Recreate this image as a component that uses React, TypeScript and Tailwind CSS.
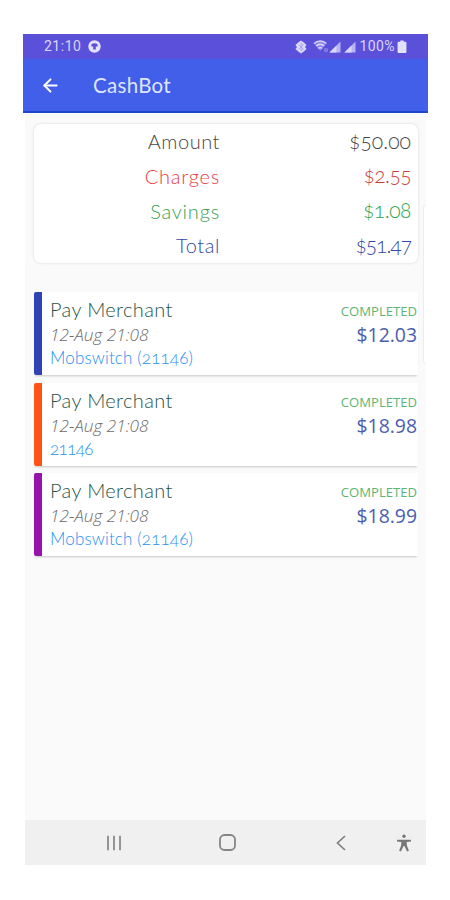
import { ArrowLeft } from 'lucide-react';

interface SummaryLine {
  label: string;
  value: string;
  labelClass: string;
  valueClass: string;
}

interface Payment {
  id: number;
  title: string;
  date: string;
  merchant: string;
  merchantClass: string;
  amount: string;
  status: string;
  barColor: string;
}

const summary: SummaryLine[] = [
  { label: 'Amount', value: '$50.00', labelClass: 'text-[#454545] tracking-[0.55px]', valueClass: 'text-[#454545] tracking-[0.05px]' },
  { label: 'Charges', value: '$2.55', labelClass: 'text-[#e84040] tracking-[0.75px]', valueClass: 'text-[#c93c3c] tracking-[-0.55px]' },
  { label: 'Savings', value: '$1.08', labelClass: 'text-[#36a050] tracking-[0.8px]', valueClass: 'text-[#2aa54a] tracking-[-0.45px]' },
  { label: 'Total', value: '$51.47', labelClass: 'text-[#3347a4] tracking-[0.6px]', valueClass: 'text-[#3347a4] tracking-[-1px]' },
];

const payments: Payment[] = [
  { id: 1, title: 'Pay Merchant', date: '12-Aug 21:08', merchant: 'Mobswitch (21146)', merchantClass: 'tracking-[0.15px]', amount: '$12.03', status: 'COMPLETED', barColor: 'bg-[#2f43b4]' },
  { id: 2, title: 'Pay Merchant', date: '12-Aug 21:08', merchant: '21146', merchantClass: 'tracking-[-0.6px]', amount: '$18.98', status: 'COMPLETED', barColor: 'bg-[#ff5316]' },
  { id: 3, title: 'Pay Merchant', date: '12-Aug 21:08', merchant: 'Mobswitch (21146)', merchantClass: 'tracking-[0.15px]', amount: '$18.99', status: 'COMPLETED', barColor: 'bg-[#9614ab]' },
];

function StatusBar() {
  return (
    <div className="flex h-[25px] items-center bg-[#5b50d9] pr-[21px] pl-[21px] font-['Roboto',sans-serif] text-[14px] text-[#d9d6fa]">
      <span className="tracking-[0.5px]">21:10</span>
      <svg className="ml-[7px] h-[13px] w-[13px]" viewBox="0 0 13 13">
        <circle cx="6.5" cy="6.5" r="6.2" fill="#e4e1fc" />
        <path d="M3.4 4.3C5 2.9 8 2.9 9.6 4.3v2.3H7.8v2.8H5.2V6.6H3.4z" fill="#5b50d9" />
      </svg>
      <div className="ml-auto flex items-center">
        <svg className="h-[14px] w-[12px]" viewBox="0 0 12 14">
          <path d="M6 0.5L8.8 2.4 11.6 5 10 7l1.6 2L8.8 11.6 6 13.5 3.2 11.6 0.4 9 2 7 0.4 5 3.2 2.4z" fill="#d9d6fa" />
          <path d="M3.8 4.9l4.4 4L6 10.8V3.2l2.2 1.9-4.4 4" fill="none" stroke="#a59eec" strokeWidth="0.8" />
        </svg>
        <svg className="ml-[6px] h-[13px] w-[16px]" viewBox="0 0 16 13">
          <path d="M1 3.5C4.6 0.2 10 0.2 13.4 3.5L7.2 11z" fill="#8e86e8" />
          <path d="M1 3.5C4.6 0.2 10 0.2 13.4 3.5M3.2 6c2.4-2.3 5.8-2.3 8 0M5.3 8.5c1.2-1.2 2.8-1.2 3.9 0" fill="none" stroke="#d9d6fa" strokeWidth="1.4" />
          <path d="M12 12V8.2M14 8.2V12" stroke="#a29cee" strokeWidth="1" />
        </svg>
        <svg className="h-[12px] w-[12px]" viewBox="0 0 12 12">
          <path d="M11.5 0.5v11H0.5z" fill="#b8b3f3" />
          <path d="M7.5 4.5v7h-7z" fill="#d9d6fa" />
        </svg>
        <svg className="ml-[3px] h-[12px] w-[12px]" viewBox="0 0 12 12">
          <path d="M11.5 0.5v11H0.5z" fill="#b8b3f3" />
          <path d="M7.5 4.5v7h-7z" fill="#d9d6fa" />
        </svg>
        <span className="ml-[4px] tracking-[0.4px]">100%</span>
        <svg className="ml-[2px] h-[13px] w-[10px]" viewBox="0 0 9 13" preserveAspectRatio="none">
          <path d="M3 0.5h3v1.3h1.5a1 1 0 0 1 1 1V12a1 1 0 0 1-1 1h-6a1 1 0 0 1-1-1V2.8a1 1 0 0 1 1-1H3z" fill="#e4e1fc" />
        </svg>
      </div>
    </div>
  );
}

function SummaryCard() {
  return (
    <div className="h-[139px] rounded-[7px] bg-white pr-[7px] shadow-[0_0_3px_rgba(0,0,0,0.14)]">
      {summary.map((line) => (
        <div key={line.label} className="flex h-[34.7px] items-center font-light oldstyle-nums">
          <span className={`w-[186px] text-right text-[20px] ${line.labelClass}`}>{line.label}</span>
          <span className={`flex-1 pb-[2px] text-right text-[21px] ${line.valueClass}`}>{line.value}</span>
        </div>
      ))}
    </div>
  );
}

function PaymentCard({ payment }: { payment: Payment }) {
  return (
    <div className="flex h-[83px] bg-white shadow-[0_2px_2px_-1px_rgba(0,0,0,0.2)]">
      <div className={`w-[8px] rounded-l-[2px] ${payment.barColor}`}></div>
      <div className="flex flex-1 justify-between pl-[8px]">
        <div className="pt-[4px]">
          <p className="h-[27px] text-[20px] leading-[26px] font-light tracking-[0.36px] text-[#1f5447]">{payment.title}</p>
          <p className="h-[24px] font-['Open_Sans',sans-serif] text-[17.2px] leading-[24px] font-light text-[#6c6c6c] italic">{payment.date}</p>
          <p className={`h-[22px] text-[17px] leading-[22px] font-light text-[#1f90ee] oldstyle-nums ${payment.merchantClass}`}>{payment.merchant}</p>
        </div>
        <div className="pt-[10px] pr-px text-right font-['Open_Sans',sans-serif]">
          <p className="h-[19px] text-[13.1px] leading-[19px] text-[#5cb572]">{payment.status}</p>
          <p className="h-[28px] text-[19.4px] leading-[28px] text-[#4a5eb0]">{payment.amount}</p>
        </div>
      </div>
    </div>
  );
}

function NavBar() {
  return (
    <div className="mx-[2px] flex h-[45px] items-center bg-[#f0f0f0]">
      <svg className="ml-[81px] h-[16px] w-[16px]" viewBox="0 0 16 16" fill="none" stroke="#8a8a8a" strokeWidth="1.8">
        <path d="M2 0.8v14.4M8 0.8v14.4M14 0.8v14.4" />
      </svg>
      <svg className="ml-[97px] h-[17px] w-[17px]" viewBox="0 0 17 17" fill="none" stroke="#858585" strokeWidth="1.8">
        <rect x="1" y="1" width="15" height="15" rx="4.5" />
      </svg>
      <svg className="ml-[100px] h-[16px] w-[10px]" viewBox="0 0 10 16" fill="none" stroke="#808080" strokeWidth="1.7">
        <path d="M9 1L1.5 8L9 15" />
      </svg>
      <svg className="ml-[50px] h-[18px] w-[16px]" viewBox="0 0 16 18" fill="#777777">
        <circle cx="8" cy="2.2" r="1.7" />
        <path d="M1 5.8h14v1.6l-4.3 0.5 0.2 3.5 2 5.4-1.8 0.6-2.7-5.3h-0.8l-2.7 5.3-1.8-0.6 2-5.4 0.2-3.5L1 7.4z" />
      </svg>
    </div>
  );
}

export default function App() {
  return (
    <div className="h-[900px] w-[450px] overflow-hidden bg-white pt-[34px] pl-[23px] font-['Lato',sans-serif]">
      <div className="relative flex h-[831px] w-[405px] flex-col">
        <StatusBar />
        <header className="flex h-[54px] items-center border-b-2 border-[#1c48d0] bg-[#415fe8] pl-[17px] text-white">
          <ArrowLeft className="h-[21px] w-[21px]" strokeWidth={2.3} />
          <h1 className="ml-[32px] text-[20.5px] tracking-[0.3px] text-[#dfe5ff]">CashBot</h1>
        </header>
        <main className="mx-[2px] flex-1 bg-[#fafafa] pt-[11px] pr-[8px] pl-[9px]">
          <SummaryCard />
          <div className="mt-[29px] flex flex-col gap-[7.5px]">
            {payments.map((payment) => (
              <PaymentCard key={payment.id} payment={payment} />
            ))}
          </div>
        </main>
        <NavBar />
        {/* edge panel handle */}
        <div className="absolute top-[171px] right-0 h-[159px] w-[4px] rounded-l-[4px] bg-white shadow-[-1px_0_1px_rgba(0,0,0,0.06)]"></div>
      </div>
    </div>
  );
}
